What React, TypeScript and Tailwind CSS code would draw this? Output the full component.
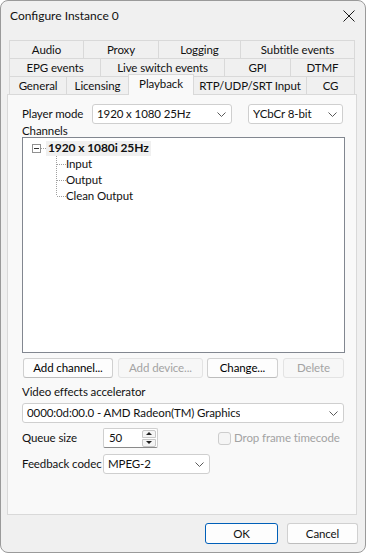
import React from "react";

const FONT = { fontFamily: "Lato, 'Noto Sans', sans-serif" };

function Chevron() {
  return (
    <svg width="9" height="5" viewBox="0 0 9 5" className="shrink-0">
      <polyline points="0.5,0.5 4.5,4.5 8.5,0.5" fill="none" stroke="#5a5a5a" strokeWidth="1" />
    </svg>
  );
}

function Combo({ w, text }: { w: string; text: string }) {
  return (
    <div className={`${w} h-[20px] shrink-0 flex items-center justify-between bg-white border border-[#cfcfcf] rounded-[3px] pl-[4px] pr-[5px]`}>
      <span className="truncate whitespace-nowrap">{text}</span>
      <Chevron />
    </div>
  );
}

function Btn({ w, text, disabled }: { w: string; text: string; disabled?: boolean }) {
  return (
    <div
      className={`${w} h-[20px] shrink-0 whitespace-nowrap flex items-center justify-center rounded-[3px] border ${
        disabled ? "border-[#e3e3e3] bg-[#f7f7f7] text-[#a3a3a3]" : "border-[#d0d0d0] border-b-[#bdbdbd] bg-[#fdfdfd] text-black"
      }`}
    >
      {text}
    </div>
  );
}

function Tab({ w, text, last }: { w: string; text: string; last?: boolean }) {
  return (
    <div
      className={`${w} h-[18px] shrink-0 whitespace-nowrap flex items-center justify-center border-t border-l border-[#d9d9d9] bg-[#f0f0f0] ${
        last ? "border-r" : ""
      }`}
    >
      {text}
    </div>
  );
}

function Connector({ last }: { last?: boolean }) {
  return (
    <svg width="10" height="16" viewBox="0 0 10 16" className="shrink-0">
      <line x1="0.5" y1="0" x2="0.5" y2={last ? 8 : 16} stroke="#a0a0a0" strokeDasharray="1 1" />
      <line x1="1" y1="8.5" x2="10" y2="8.5" stroke="#a0a0a0" strokeDasharray="1 1" />
    </svg>
  );
}

export default function App() {
  return (
    <div className="w-[366px] h-[553px] bg-white text-[11.5px] tracking-[-0.1px] text-[#111]" style={FONT}>
      <div className="w-[366px] h-[553px] flex flex-col bg-[#f0f0f0] border border-[#9a9a9a] rounded-[8px] overflow-hidden">
        {/* Title bar */}
        <div className="h-[29px] flex items-center justify-between pl-[9px] pr-[8px]">
          <span className="text-[12px] tracking-normal leading-none whitespace-nowrap">Configure Instance 0</span>
          <svg width="12" height="12" viewBox="0 0 12 12" className="mr-[2px]">
            <line x1="0.5" y1="0.5" x2="11.5" y2="11.5" stroke="#1a1a1a" strokeWidth="1" />
            <line x1="11.5" y1="0.5" x2="0.5" y2="11.5" stroke="#1a1a1a" strokeWidth="1" />
          </svg>
        </div>

        {/* Tabs */}
        <div className="mt-[10px] ml-[8px] flex flex-col">
          <div className="flex h-[18px]">
            <Tab w="w-[74px]" text="Audio" />
            <Tab w="w-[75px]" text="Proxy" />
            <Tab w="w-[82px]" text="Logging" />
            <Tab w="w-[115px]" text="Subtitle events" last />
          </div>
          <div className="flex h-[18px]">
            <Tab w="w-[91px]" text="EPG events" />
            <Tab w="w-[124px]" text="Live switch events" />
            <Tab w="w-[66px]" text="GPI" />
            <Tab w="w-[65px]" text="DTMF" last />
          </div>
          <div className="flex h-[18px] items-end">
            <Tab w="w-[57px]" text="General" />
            <Tab w="w-[62px]" text="Licensing" />
            <div className="relative z-10 w-[66px] h-[21px] mb-[-1px] shrink-0 flex items-center justify-center pb-[2px] border-t border-l border-r border-[#d9d9d9] bg-[#f9f9f9]">
              Playback
            </div>
            <div className="w-[112px] h-[18px] shrink-0 whitespace-nowrap flex items-center justify-center border-t border-[#d9d9d9] bg-[#f0f0f0]">
              RTP/UDP/SRT Input
            </div>
            <Tab w="w-[49px]" text="CG" last />
          </div>
        </div>

        {/* Panel */}
        <div className="ml-[6px] w-[350px] h-[421px] border border-[#d9d9d9] bg-[#f9f9f9]">
          <div className="ml-[14px] w-[323px] flex flex-col whitespace-nowrap">
            <div className="mt-[9px] h-[20px] flex items-center">
              <span className="w-[70px] shrink-0">Player mode</span>
              <Combo w="w-[140px]" text="1920 x 1080 25Hz" />
              <div className="w-[16px] shrink-0" />
              <Combo w="w-[95px]" text="YCbCr 8-bit" />
            </div>
            <div className="h-[13px] flex items-center">Channels</div>
            <div className="h-[216px] w-[323px] border border-[#828790] bg-white pt-[2px]">
              <div className="h-[16px] flex items-center">
                <div className="ml-[9px] w-[9px] h-[9px] border border-[#919191] bg-white flex items-center justify-center shrink-0">
                  <div className="w-[5px] h-[1px] bg-[#333]" />
                </div>
                <svg width="5" height="16" viewBox="0 0 5 16" className="shrink-0">
                  <line x1="0" y1="8.5" x2="5" y2="8.5" stroke="#a0a0a0" strokeDasharray="1 1" />
                </svg>
                <span className="h-[15px] flex items-center px-[2px] bg-[#f0f0f0] font-bold text-[12px]">1920 x 1080i 25Hz</span>
              </div>
              <div className="ml-[33px] flex flex-col">
                {["Input", "Output", "Clean Output"].map((t, i) => (
                  <div key={t} className="h-[16px] flex items-center">
                    <Connector last={i === 2} />
                    <span>{t}</span>
                  </div>
                ))}
              </div>
            </div>
            <div className="mt-[5px] h-[20px] flex items-center ml-[1px]">
              <Btn w="w-[90px]" text="Add channel..." />
              <div className="w-[5px] shrink-0" />
              <Btn w="w-[85px]" text="Add device..." disabled />
              <div className="w-[4px] shrink-0" />
              <Btn w="w-[71px]" text="Change..." />
              <div className="w-[5px] shrink-0" />
              <Btn w="w-[61px]" text="Delete" disabled />
            </div>
            <div className="mt-[6px] h-[16px] flex items-center">Video effects accelerator</div>
            <div className="mt-[3px]">
              <Combo w="w-[322px]" text="0000:0d:00.0 - AMD Radeon(TM) Graphics" />
            </div>
            <div className="mt-[5px] h-[20px] flex items-center">
              <span className="w-[81px] shrink-0">Queue size</span>
              <div className="w-[55px] h-[20px] shrink-0 flex items-center justify-between bg-white border border-[#cfcfcf] border-b-[#8a8a8a] rounded-[2px] pl-[5px] pr-[1px]">
                <span>50</span>
                <div className="w-[14px] h-[17px] flex flex-col">
                  <div className="h-[8px] flex items-center justify-center border border-[#c8c8c8] bg-[#f5f5f5] rounded-t-[2px]">
                    <svg width="6" height="3" viewBox="0 0 6 3"><polygon points="0,3 3,0 6,3" fill="#222" /></svg>
                  </div>
                  <div className="h-[8px] mt-[1px] flex items-center justify-center border border-[#c8c8c8] bg-[#f5f5f5] rounded-b-[2px]">
                    <svg width="6" height="3" viewBox="0 0 6 3"><polygon points="0,0 6,0 3,3" fill="#222" /></svg>
                  </div>
                </div>
              </div>
              <div className="ml-[60px] flex items-center text-[#a3a3a3] whitespace-nowrap">
                <div className="w-[13px] h-[13px] shrink-0 rounded-[3px] border border-[#cdcdcd] bg-[#f5f5f5]" />
                <span className="ml-[3px]">Drop frame timecode</span>
              </div>
            </div>
            <div className="mt-[6px] h-[20px] flex items-center">
              <span className="w-[81px] shrink-0 whitespace-nowrap">Feedback codec</span>
              <Combo w="w-[107px]" text="MPEG-2" />
            </div>
          </div>
        </div>

        {/* Bottom buttons */}
        <div className="mt-[8px] pr-[7px] flex justify-end">
          <div className="w-[73px] h-[21px] flex items-center justify-center rounded-[3px] border border-[#005fb8] bg-[#fdfdfd]">OK</div>
          <div className="w-[9px]" />
          <div className="w-[71px] h-[21px] flex items-center justify-center rounded-[3px] border border-[#d0d0d0] border-b-[#bdbdbd] bg-[#fdfdfd]">Cancel</div>
        </div>
      </div>
    </div>
  );
}
